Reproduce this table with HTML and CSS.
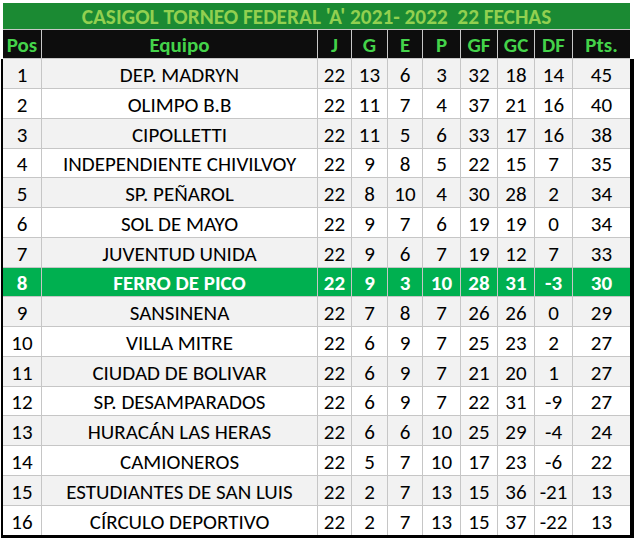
FILE: index.html
```html
<!DOCTYPE html>
<html lang="es">
<head>
<meta charset="utf-8">
<title>Casigol Torneo Federal A</title>
<link rel="stylesheet" href="styles.css">
</head>
<body>
<div class="sheet">
  <div class="title">CASIGOL TORNEO FEDERAL 'A' 2021- 2022&nbsp; 22 FECHAS</div>
  <div class="head">
    <div>Pos</div><div>Equipo</div><div>J</div><div>G</div><div>E</div><div>P</div><div>GF</div><div>GC</div><div>DF</div><div>Pts.</div>
  </div>
  <div class="body">
    <div class="row alt"><div>1</div><div>DEP. MADRYN</div><div>22</div><div>13</div><div>6</div><div>3</div><div>32</div><div>18</div><div>14</div><div>45</div></div>
    <div class="row"><div>2</div><div>OLIMPO B.B</div><div>22</div><div>11</div><div>7</div><div>4</div><div>37</div><div>21</div><div>16</div><div>40</div></div>
    <div class="row alt"><div>3</div><div>CIPOLLETTI</div><div>22</div><div>11</div><div>5</div><div>6</div><div>33</div><div>17</div><div>16</div><div>38</div></div>
    <div class="row"><div>4</div><div>INDEPENDIENTE CHIVILVOY</div><div>22</div><div>9</div><div>8</div><div>5</div><div>22</div><div>15</div><div>7</div><div>35</div></div>
    <div class="row alt"><div>5</div><div>SP. PEÑAROL</div><div>22</div><div>8</div><div>10</div><div>4</div><div>30</div><div>28</div><div>2</div><div>34</div></div>
    <div class="row"><div>6</div><div>SOL DE MAYO</div><div>22</div><div>9</div><div>7</div><div>6</div><div>19</div><div>19</div><div>0</div><div>34</div></div>
    <div class="row alt"><div>7</div><div>JUVENTUD UNIDA</div><div>22</div><div>9</div><div>6</div><div>7</div><div>19</div><div>12</div><div>7</div><div>33</div></div>
    <div class="row hl"><div>8</div><div>FERRO DE PICO</div><div>22</div><div>9</div><div>3</div><div>10</div><div>28</div><div>31</div><div>-3</div><div>30</div></div>
    <div class="row alt"><div>9</div><div>SANSINENA</div><div>22</div><div>7</div><div>8</div><div>7</div><div>26</div><div>26</div><div>0</div><div>29</div></div>
    <div class="row"><div>10</div><div>VILLA MITRE</div><div>22</div><div>6</div><div>9</div><div>7</div><div>25</div><div>23</div><div>2</div><div>27</div></div>
    <div class="row alt"><div>11</div><div>CIUDAD DE BOLIVAR</div><div>22</div><div>6</div><div>9</div><div>7</div><div>21</div><div>20</div><div>1</div><div>27</div></div>
    <div class="row"><div>12</div><div>SP. DESAMPARADOS</div><div>22</div><div>6</div><div>9</div><div>7</div><div>22</div><div>31</div><div>-9</div><div>27</div></div>
    <div class="row alt"><div>13</div><div>HURACÁN LAS HERAS</div><div>22</div><div>6</div><div>6</div><div>10</div><div>25</div><div>29</div><div>-4</div><div>24</div></div>
    <div class="row"><div>14</div><div>CAMIONEROS</div><div>22</div><div>5</div><div>7</div><div>10</div><div>17</div><div>23</div><div>-6</div><div>22</div></div>
    <div class="row alt"><div>15</div><div>ESTUDIANTES DE SAN LUIS</div><div>22</div><div>2</div><div>7</div><div>13</div><div>15</div><div>36</div><div>-21</div><div>13</div></div>
    <div class="row"><div>16</div><div>CÍRCULO DEPORTIVO</div><div>22</div><div>2</div><div>7</div><div>13</div><div>15</div><div>37</div><div>-22</div><div>13</div></div>
  </div>
</div>
</body>
</html>
```
FILE: styles.css
```css
* { box-sizing: border-box; }
html, body { margin: 0; padding: 0; background: #ffffff; }
body {
  font-family: Carlito, Calibri, Lato, "Liberation Sans", sans-serif;
  font-size: 21px;
  color: #000;
}
.sheet {
  width: 635px;
  padding-top: 3px;
}
.title {
  margin-left: 3px;
  width: 627px;
  height: 27px;
  background: #1b8a33;
  color: #92d050;
  font-weight: bold;
  font-size: 21.3px;
  text-align: center;
  line-height: 28px;
  border-bottom: 1px solid #c8c8c8;
  white-space: nowrap;
}
.head, .row {
  display: grid;
  grid-template-columns: 39px 276px 34px 36px 35px 38px 37px 37px 38px 57px;
}
.head {
  margin-left: 3px;
  width: 627px;
  height: 29px;
  background: #0d0d0d;
  color: #44d34a;
  font-weight: bold;
  font-size: 21px;
}
.head > div {
  border-right: 1px solid #c8c8c8;
  border-bottom: 1px solid #c8c8c8;
  display: flex;
  align-items: center;
  justify-content: center;
  padding-top: 2px;
}
.head > div:last-child { border-right: none; }
.body {
  margin-left: 1px;
  width: 633px;
  border-left: 2px solid #000;
  border-right: 4px solid #000;
  border-bottom: 3px solid #000;
}
.row {
  height: 29.75px;
  background: #ffffff;
}
.row.alt { background: #f2f2f2; }
.row > div {
  border-right: 1px solid #c6c6c6;
  border-bottom: 1px solid #c6c6c6;
  display: flex;
  align-items: center;
  justify-content: center;
  padding-top: 3px;
  white-space: nowrap;
}
.row > div:last-child { border-right: none; }
.row:last-child > div { border-bottom: none; }
.row.hl {
  background: #00b050;
  color: #ffffff;
  font-weight: bold;
}
```
